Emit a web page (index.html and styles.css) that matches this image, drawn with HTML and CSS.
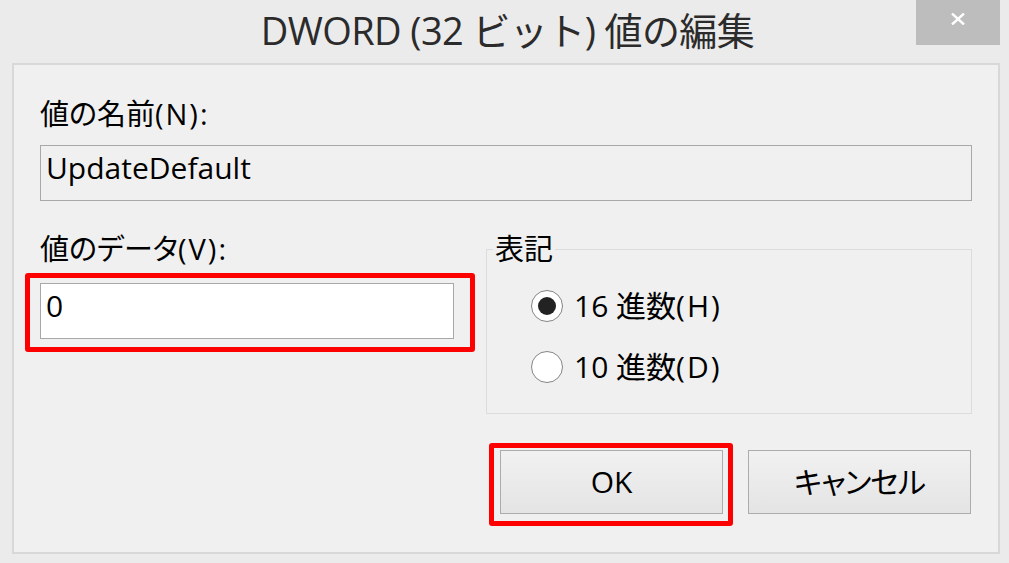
FILE: index.html
```html
<!DOCTYPE html>
<html lang="ja">
<head>
<meta charset="utf-8">
<title>DWORD (32 ビット) 値の編集</title>
<link rel="stylesheet" href="styles.css">
</head>
<body>
<div class="window">
  <header class="titlebar">
    <div class="title">DWORD (32 ビット) 値の編集</div>
    <div class="close">
      <svg width="14" height="12" viewBox="0 0 14 12"><path d="M1 0.5 L13 11.5 M13 0.5 L1 11.5" stroke="#fff" stroke-width="2.4" fill="none"/></svg>
    </div>
  </header>
  <main class="panel">
    <div class="label">値の名前<span class="paren">(N):</span></div>
    <div class="field field-readonly">UpdateDefault</div>
    <div class="row">
      <div class="col-left">
        <div class="label">値のデータ<span class="paren">(V):</span></div>
        <div class="marked marked-data">
          <div class="field field-edit">0</div>
        </div>
      </div>
      <fieldset class="group">
        <legend class="legend">表記</legend>
        <div class="radio-row"><span class="radio radio-on"></span><span class="radio-text">16 進数<span class="paren">(H)</span></span></div>
        <div class="radio-row"><span class="radio"></span><span class="radio-text">10 進数<span class="paren">(D)</span></span></div>
      </fieldset>
    </div>
    <div class="buttons">
      <div class="marked marked-ok"><div class="btn">OK</div></div>
      <div class="btn btn-kana">キャンセル</div>
    </div>
  </main>
</div>
</body>
</html>
```
FILE: styles.css
```css
* { box-sizing: border-box; }
html, body { margin: 0; padding: 0; }
body {
  width: 1009px;
  height: 563px;
  background: #ebebeb;
  font-family: "Open Sans", "Noto Sans CJK JP", sans-serif;
  color: #000;
  overflow: hidden;
}
.window { display: flex; flex-direction: column; height: 563px; }
.titlebar {
  height: 63px;
  display: grid;
  grid-template-columns: 1fr auto 1fr;
  align-items: start;
}
.title {
  grid-column: 2;
  font-size: 38px;
  line-height: 60px;
  color: #2b2b2b;
  white-space: nowrap;
  letter-spacing: -0.6px;
  margin-left: 6px;
}
.close {
  grid-column: 3;
  justify-self: end;
  width: 84px;
  height: 45px;
  margin-right: 9px;
  background: #bdbdbd;
  display: flex;
  align-items: center;
  justify-content: center;
  padding-bottom: 7px;
}
.panel {
  margin: 0 9px 9px 12px;
  height: 491px;
  border: 2px solid #d8d8d8;
  background: #f0f0f0;
  padding: 31px 26px 0 26px;
  display: flex;
  flex-direction: column;
}
.label {
  font-size: 29px;
  line-height: 36px;
  white-space: nowrap;
  font-feature-settings: "palt";
}
.paren { letter-spacing: 2px; }
.field {
  height: 56px;
  border: 1px solid #a8a8a8;
  font-size: 30px;
  line-height: 44px;
  padding-left: 5px;
}
.field-readonly { margin-top: 13px; background: #f0f0f0; }
.field-edit { background: #fff; }
.row {
  margin-top: 30px;
  display: grid;
  grid-template-columns: 414px 486px;
  column-gap: 32px;
  align-items: start;
}
.col-left { display: flex; flex-direction: column; }
.marked { position: relative; }
.marked::after {
  content: "";
  position: absolute;
  border: 5px solid #ff0000;
  border-radius: 3px;
  pointer-events: none;
}
.marked-data { margin-top: 16px; }
.marked-data::after { top: -10px; right: -21px; bottom: -13px; left: -15px; }
.group {
  margin: 0;
  padding: 19px 0 25px 6px;
  border: 1px solid #dcdcdc;
  height: 183px;
}
.legend {
  padding: 0 2px;
  font-size: 29px;
  line-height: 36px;
}
.radio-row {
  display: flex;
  align-items: center;
  height: 40px;
  margin-left: 38px;
  gap: 11px;
}
.radio-row + .radio-row { margin-top: 21px; }
.radio {
  width: 32px;
  height: 32px;
  border-radius: 50%;
  border: 1px solid #858585;
  background: #fff;
  display: flex;
  align-items: center;
  justify-content: center;
  flex: none;
}
.radio-on::after {
  content: "";
  width: 18px;
  height: 18px;
  border-radius: 50%;
  background: #222;
}
.radio-text { font-size: 30px; line-height: 40px; white-space: nowrap; }
.buttons {
  margin-top: 36px;
  display: flex;
  justify-content: flex-end;
  gap: 25px;
  padding-right: 1px;
}
.marked-ok::after { top: -7px; right: -10px; bottom: -12px; left: -11px; }
.btn {
  width: 223px;
  height: 64px;
  border: 1px solid #acacac;
  background: linear-gradient(#f1f1f1, #e4e4e4);
  font-size: 30px;
  line-height: 62px;
  text-align: center;
}
.btn-kana { font-feature-settings: "palt"; letter-spacing: -1px; }
```
